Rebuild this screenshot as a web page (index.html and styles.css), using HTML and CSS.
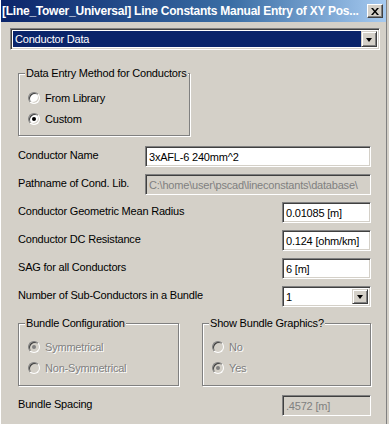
FILE: index.html
```html
<!DOCTYPE html>
<html lang="en">
<head>
  <meta charset="UTF-8" />
  <title>Line Constants Manual Entry</title>
  <link rel="stylesheet" href="styles.css">
</head>
<body>
  <div class="window">
    <div class="titlebar">
      <span class="title">[Line_Tower_Universal] Line Constants Manual Entry of XY Pos...</span>
      <span class="close-btn">
        <svg width="8" height="7" viewBox="0 0 8 7"><path d="M0 0h2l2 2.5L6 0h2L5 3.5 8 7H6L4 4.5 2 7H0l3-3.5z" fill="#000"/></svg>
      </span>
    </div>

    <div class="content">
      <div class="combo combo-page">
        <span class="combo-value selected">Conductor Data</span>
        <span class="combo-btn"><span class="arrow"></span></span>
      </div>

      <div class="inner">
        <fieldset class="group group-method">
          <legend>Data Entry Method for Conductors</legend>
          <div class="radio"><span class="dot"></span>From Library</div>
          <div class="radio"><span class="dot checked"></span>Custom</div>
        </fieldset>

        <div class="rows">
          <div class="row">
            <span class="label">Conductor Name</span>
            <span class="field field-long">3xAFL-6 240mm^2</span>
          </div>
          <div class="row">
            <span class="label">Pathname of Cond. Lib.</span>
            <span class="field field-long disabled">C:\home\user\pscad\lineconstants\database\</span>
          </div>
          <div class="row">
            <span class="label">Conductor Geometric Mean Radius</span>
            <span class="field field-short">0.01085 [m]</span>
          </div>
          <div class="row">
            <span class="label">Conductor DC Resistance</span>
            <span class="field field-short">0.124 [ohm/km]</span>
          </div>
          <div class="row">
            <span class="label">SAG for all Conductors</span>
            <span class="field field-short">6 [m]</span>
          </div>
          <div class="row">
            <span class="label">Number of Sub-Conductors in a Bundle</span>
            <span class="combo combo-short">
              <span class="combo-value">1</span>
              <span class="combo-btn"><span class="arrow"></span></span>
            </span>
          </div>
        </div>

        <div class="group-pair">
          <fieldset class="group group-config">
            <legend>Bundle Configuration</legend>
            <div class="radio off"><span class="dot checked"></span>Symmetrical</div>
            <div class="radio off"><span class="dot"></span>Non-Symmetrical</div>
          </fieldset>
          <fieldset class="group group-graphics">
            <legend>Show Bundle Graphics?</legend>
            <div class="radio off"><span class="dot"></span>No</div>
            <div class="radio off"><span class="dot checked"></span>Yes</div>
          </fieldset>
        </div>

        <div class="row row-spacing">
          <span class="label">Bundle Spacing</span>
          <span class="field field-short disabled">.4572 [m]</span>
        </div>
      </div>
    </div>
  </div>
</body>
</html>
```

FILE: styles.css
```css
body {
  margin: 0;
  background-color: #d4d0c8;
  font-family: "Liberation Sans", Arial, sans-serif;
  font-size: 11px;
  letter-spacing: -0.2px;
  color: #000;
}

.window {
  width: 387px;
  height: 424px;
  box-sizing: border-box;
  overflow: hidden;
  background-color: #d4d0c8;
  border-left: 1px solid #fff;
  border-right: 1px solid #808080;
}

.titlebar {
  height: 22px;
  display: flex;
  align-items: center;
  gap: 6px;
  padding: 0 3px 0 2px;
  margin-left: -1px;
  background: linear-gradient(to right, #0a246a 0%, #3a6ea5 60%, #a6caf0 100%);
}

.title {
  flex: 1;
  overflow: hidden;
  color: #fff;
  font-weight: bold;
  font-size: 12px;
  letter-spacing: -0.25px;
  white-space: nowrap;
}

.close-btn {
  width: 16px;
  height: 14px;
  box-sizing: border-box;
  display: flex;
  align-items: center;
  justify-content: center;
  background-color: #d4d0c8;
  border-top: 1px solid #fff;
  border-left: 1px solid #fff;
  border-right: 1px solid #404040;
  border-bottom: 1px solid #404040;
  box-shadow: inset -1px -1px 0 #808080;
}

.content {
  padding: 6px 0 0 9px;
}

/* sunken 3d box used by text fields and combos */
.field,
.combo {
  box-sizing: border-box;
  height: 21px;
  border-top: 1px solid #808080;
  border-left: 1px solid #808080;
  border-right: 1px solid #fff;
  border-bottom: 1px solid #fff;
  box-shadow: inset 1px 1px 0 #404040, inset -1px -1px 0 #d4d0c8;
  background-color: #fff;
}

.combo {
  display: flex;
  align-items: stretch;
  padding: 2px;
}

.combo-page {
  width: 370px;
  height: 22px;
}

.combo-value {
  flex: 1;
  display: flex;
  align-items: center;
  padding-left: 1px;
}

.combo-value.selected {
  background-color: #0a246a;
  color: #fff;
  padding-left: 2px;
}

.combo-btn {
  width: 16px;
  box-sizing: border-box;
  display: flex;
  align-items: center;
  justify-content: center;
  background-color: #d4d0c8;
  border-top: 1px solid #d4d0c8;
  border-left: 1px solid #d4d0c8;
  border-right: 1px solid #404040;
  border-bottom: 1px solid #404040;
  box-shadow: inset 1px 1px 0 #fff, inset -1px -1px 0 #808080;
}

.arrow {
  width: 0;
  height: 0;
  border-left: 3.5px solid transparent;
  border-right: 3.5px solid transparent;
  border-top: 4px solid #000;
  margin-top: 1px;
}

.inner {
  padding-left: 8px;
  width: 353px;
}

.group {
  margin: 0;
  padding: 0;
  min-width: 0;
  border: 1px solid #808080;
  box-shadow: inset 1px 1px 0 #fff, 1px 1px 0 #fff;
}

.group legend {
  margin-left: -3px;
  padding: 0 1px;
  line-height: 13px;
  white-space: nowrap;
  background-color: #d4d0c8;
}

.group-method {
  width: 172px;
  box-sizing: border-box;
  margin-top: 17px;
  padding: 7px 0 6px 9px;
}

.radio {
  height: 21px;
  display: flex;
  align-items: center;
  gap: 5px;
}

.dot {
  width: 12px;
  height: 12px;
  box-sizing: border-box;
  border-radius: 50%;
  border: 1px solid;
  border-color: #808080 #fff #fff #808080;
  box-shadow: inset 1px 1px 0 #404040, inset -1px -1px 0 #d4d0c8;
  background-color: #fff;
  display: flex;
  align-items: center;
  justify-content: center;
}

.dot.checked::after {
  content: "";
  width: 4px;
  height: 4px;
  border-radius: 50%;
  background-color: #000;
}

.radio.off {
  color: #808080;
  text-shadow: 1px 1px 0 #fff;
}

.radio.off .dot {
  background-color: #d4d0c8;
}

.radio.off .dot.checked::after {
  background-color: #808080;
}

.rows {
  margin-top: 10px;
  display: flex;
  flex-direction: column;
  gap: 7px;
}

.row {
  display: flex;
  align-items: center;
  justify-content: space-between;
  height: 21px;
}

.label {
  padding-bottom: 3px;
}

.field {
  display: flex;
  align-items: center;
  padding-left: 3px;
  white-space: nowrap;
  overflow: hidden;
}

.field-long {
  width: 226px;
}

.field-short,
.combo-short {
  width: 89px;
}

.field.disabled {
  background-color: #d4d0c8;
  color: #808080;
}

.group-pair {
  margin-top: 10px;
  display: flex;
  gap: 23px;
}

.group-config,
.group-graphics {
  box-sizing: border-box;
  padding: 6px 0 7px 9px;
}

.group-config {
  width: 161px;
}

.group-graphics {
  width: 169px;
}

.row-spacing {
  margin-top: 9px;
}
```
